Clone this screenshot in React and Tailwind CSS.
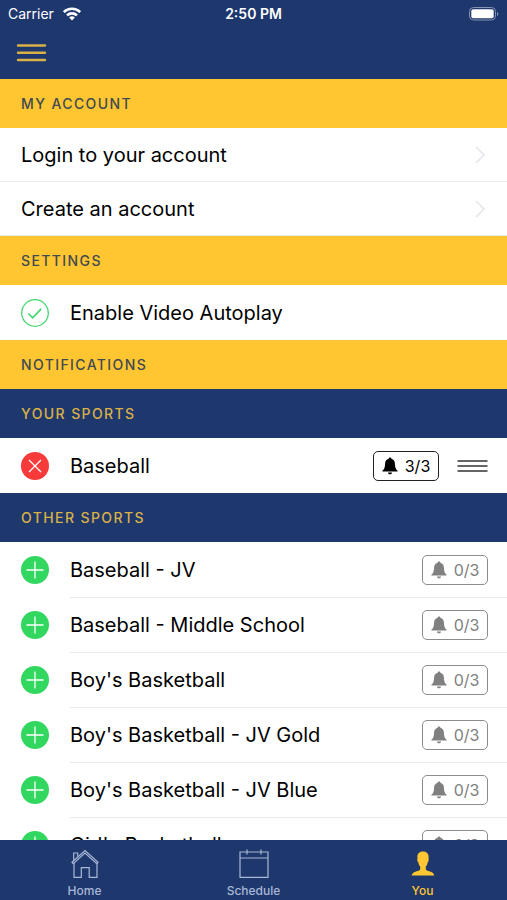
import React, { useState } from "react";

const otherSports = [
  "Baseball - JV",
  "Baseball - Middle School",
  "Boy's Basketball",
  "Boy's Basketball - JV Gold",
  "Boy's Basketball - JV Blue",
  "Girl's Basketball",
];

const StatusBar = () => (
  <div className="grid grid-cols-3 items-center h-7 px-2 text-white text-sm">
    <div className="flex items-center gap-2">
      <span>Carrier</span>
      <svg className="w-5 h-4" viewBox="0 0 20 16" fill="none" stroke="currentColor" strokeWidth="2.6">
        <path d="M1.8 6.2a11.6 11.6 0 0 1 16.4 0" />
        <path d="M5 9.4a7.1 7.1 0 0 1 10 0" />
        <path d="M10 14.6l-2.9-3a4.1 4.1 0 0 1 5.8 0z" fill="currentColor" stroke="none" />
      </svg>
    </div>
    <span className="text-center font-semibold">2:50 PM</span>
    <svg className="w-8 h-4 justify-self-end" viewBox="0 0 32 16">
      <rect x="2.5" y="1.500" width="26" height="12.500" rx="4" fill="none" stroke="#8593b5" />
      <rect x="4.300" y="3.300" width="22.400" height="9" rx="2" fill="#fff" />
      <path d="M30 6v4c1.800-.8 1.800-3.200 0-4z" fill="#8593b5" />
    </svg>
  </div>
);

const SectionHeader = ({ children, dark }) => (
  <h2
    className={`flex items-center h-[49px] px-[21px] text-sm font-medium tracking-widest uppercase ${
      dark ? "bg-[#1e376d] text-[#d9b146]" : "bg-[#ffc631] text-[#3f4a52]"
    }`}
  >
    {children}
  </h2>
);

const AccountLink = ({ children }) => (
  <a href="#account" className="flex items-center justify-between h-[54px] px-[21px] border-b border-[#ececf0]">
    <span>{children}</span>
    <svg className="w-3 h-5" viewBox="0 0 12 20" fill="none" stroke="#e4e4ec" strokeWidth="1.500">
      <path d="M2 2l8 8-8 8" />
    </svg>
  </a>
);

const Bell = () => (
  <svg className="w-4 h-5" viewBox="0 0 16 20" fill="currentColor">
    <path d="M8 1.500c-.8 0-1.300.500-1.400 1.200C4.300 3.300 3.200 5 3.100 7.400c-.1 3.800-.8 5.600-2.500 7.200-.5.500-.3 1 .3 1h14.200c.6 0 .8-.5.3-1-1.700-1.600-2.400-3.400-2.500-7.200-.1-2.400-1.200-4.100-3.500-4.700C9.300 2 8.800 1.500 8 1.500z" />
    <path d="M6 16.400h4c-.1 1.200-.9 1.900-2 1.900s-1.900-.7-2-1.900z" />
  </svg>
);

const NotificationButton = ({ count, sport, active }) => (
  <button
    aria-label={`${sport} notifications ${count}/3`}
    className={`flex items-center justify-center gap-[7px] w-[66px] h-[30px] shrink-0 rounded-[5px] text-base border ${
      active ? "border-[#222222] text-black" : "border-[#8c8c8c] text-[#808080]"
    }`}
  >
    <Bell />
    <span>{count}/3</span>
  </button>
);

const RoundButton = ({ label, remove }) => (
  <button aria-label={label} className="w-7 h-7 shrink-0">
    <svg className="w-7 h-7" viewBox="0 0 28 28" stroke="#fff" strokeWidth="1.300">
      <circle cx="14" cy="14" r="14" fill={remove ? "#f73b3b" : "#32d760"} stroke="none" />
      <path d={remove ? "M8 8l12 12M20 8L8 20" : "M14 5.500v17M5.500 14h17"} />
    </svg>
  </button>
);

const SportRow = ({ name }) => (
  <li className="group flex items-center h-[55px] pl-[21px]">
    <RoundButton label={`Add ${name}`} />
    <div className="flex flex-1 items-center justify-between h-full ml-[21px] pr-[19px] border-t border-[#e9e9e9] group-first:border-transparent">
      <span>{name}</span>
      <NotificationButton count={0} sport={name} />
    </div>
  </li>
);

const HomeIcon = () => (
  <svg className="w-8 h-8" viewBox="0 0 32 32" fill="none" stroke="currentColor" strokeWidth="1.200">
    <path d="M3 14.300L16 2.500l13 11.800-1.200 1.300L16 5 4.200 15.600z" />
    <path d="M4.700 12.500V5h4v3.700" />
    <path d="M5 15v14.300h7.300v-9.600h7.900v9.600H28V15" />
  </svg>
);

const ScheduleIcon = () => (
  <svg className="w-8 h-8" viewBox="0 0 32 32" fill="none" stroke="currentColor" strokeWidth="1.200">
    <path d="M2 4h28v25.300H2zM2 10h28M9 1.500v5M23 1.500v5" />
  </svg>
);

const YouIcon = () => (
  <svg className="w-8 h-8" viewBox="0 0 32 32" fill="currentColor">
    <path d="M16 3.500c-4 0-5.800 2.400-5.600 6 .1.900.1 1.500-.1 2-.2 1 .3 2.300 1 2.800.3 1.900.9 3.200 1.900 4.300v2.600c-.4 1.200-1.700 1.500-3.600 2.100-2.700.8-4.400 1.800-4.900 4.200h22.600c-.500-2.400-2.200-3.400-4.900-4.200-1.900-.6-3.200-.9-3.600-2.100v-2.600c1-1.100 1.600-2.400 1.900-4.300.7-.5 1.200-1.800 1-2.800-.2-.5-.2-1.100-.1-2 .2-3.600-1.600-6-5.600-6z" />
  </svg>
);

const TabLink = ({ icon, label, active }) => (
  <a
    href={`#${label.toLowerCase()}`}
    className={`flex flex-col items-center gap-[3px] pt-2 text-xs font-medium ${
      active ? "text-[#ffc631]" : "text-[#a9b8d6]"
    }`}
  >
    {icon}
    <span>{label}</span>
  </a>
);

const App = () => {
  const [autoplay, setAutoplay] = useState(true);

  return (
    <div className="flex flex-col h-screen bg-white text-black text-xl font-['Inter',sans-serif]">
      <header className="shrink-0 h-[79px] bg-[#1e376d]">
        <StatusBar />
        <button aria-label="Menu" className="block ml-4 mt-3">
          <svg className="w-8 h-6" viewBox="0 0 32 24" stroke="#d9b146" strokeWidth="2.400" strokeLinecap="round">
            <path d="M2 5.500h27M2 12.700h27M2 20h27" />
          </svg>
        </button>
      </header>

      <main className="flex-1 min-h-0 overflow-y-auto [scrollbar-width:none]">
        <SectionHeader>My Account</SectionHeader>
        <AccountLink>Login to your account</AccountLink>
        <AccountLink>Create an account</AccountLink>

        <SectionHeader>Settings</SectionHeader>
        <label className="flex items-center h-[55px] px-[21px] gap-[21px]">
          <input
            type="checkbox"
            className="sr-only"
            checked={autoplay}
            onChange={() => setAutoplay(!autoplay)}
          />
          <svg className="w-7 h-7" viewBox="0 0 28 28" fill="none" stroke="#45d671" strokeWidth="1.300">
            <circle cx="14" cy="14" r="13.300" />
            {autoplay && <path d="M7.500 14.500l4.200 4.300 8.500-9" strokeWidth="1.700" />}
          </svg>
          <span>Enable Video Autoplay</span>
        </label>

        <SectionHeader>Notifications</SectionHeader>
        <SectionHeader dark>Your Sports</SectionHeader>
        <div className="flex items-center h-[55px] pl-[21px] pr-[18px]">
          <RoundButton label="Remove Baseball" remove />
          <span className="flex-1 ml-[21px]">Baseball</span>
          <NotificationButton count={3} sport="Baseball" active />
          <button aria-label="Reorder Baseball" className="ml-[18px]">
            <svg className="w-8 h-4" viewBox="0 0 32 16" stroke="#333" strokeWidth="1.500">
              <path d="M.5 3h30M.5 8h30M.5 13h30" />
            </svg>
          </button>
        </div>

        <SectionHeader dark>Other Sports</SectionHeader>
        <ul>
          {otherSports.map((name) => (
            <SportRow key={name} name={name} />
          ))}
        </ul>
      </main>

      <nav className="grid grid-cols-3 shrink-0 h-[60px] bg-[#1e376d]">
        <TabLink icon={<HomeIcon />} label="Home" />
        <TabLink icon={<ScheduleIcon />} label="Schedule" />
        <TabLink icon={<YouIcon />} label="You" active />
      </nav>
    </div>
  );
};

export default App;
